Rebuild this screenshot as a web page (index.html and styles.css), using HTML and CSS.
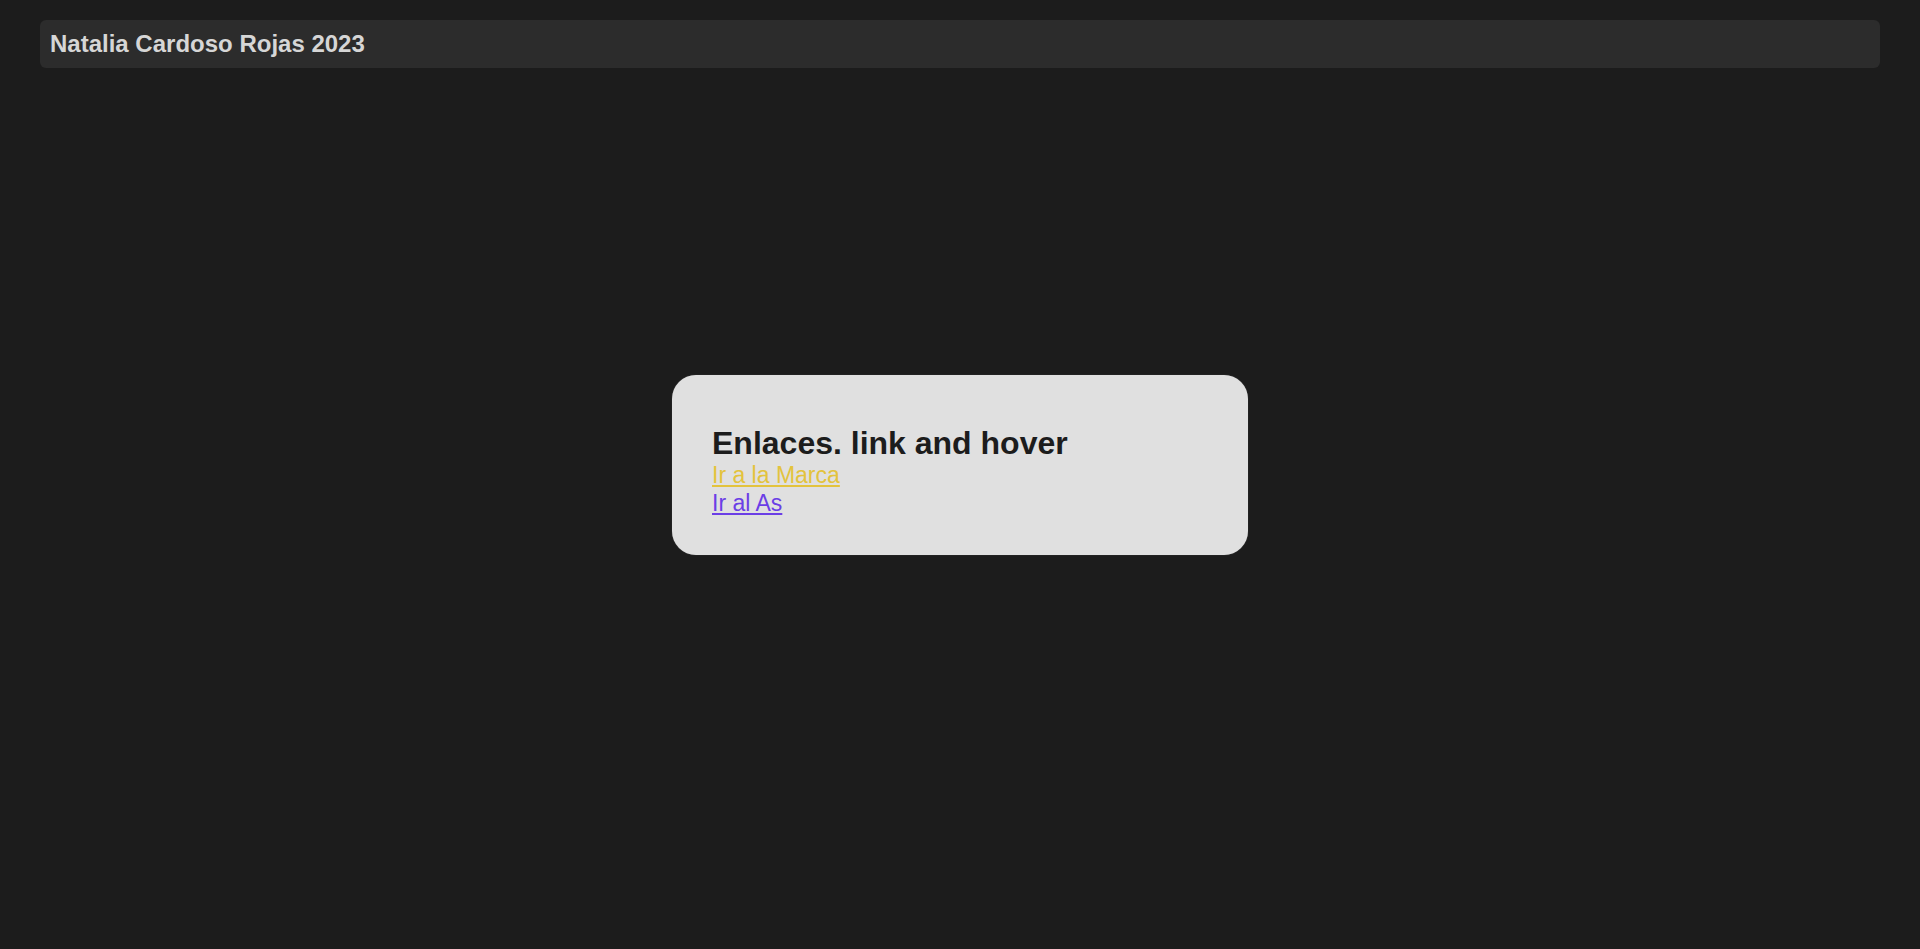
FILE: index.html
```html
<!DOCTYPE html>
<html lang="es">
<head>
<meta charset="utf-8">
<title>Enlaces</title>
<link rel="stylesheet" href="styles.css">
</head>
<body>
<header class="topbar">Natalia Cardoso Rojas 2023</header>
<main class="stage">
  <section class="card">
    <h1 class="card-title">Enlaces. link and hover</h1>
    <a class="link link-marca" href="#">Ir a la Marca</a>
    <a class="link link-as" href="#">Ir al As</a>
  </section>
</main>
</body>
</html>
```
FILE: styles.css
```css
html, body {
  margin: 0;
  padding: 0;
}
body {
  background: #1c1c1c;
  font-family: "Liberation Sans", Arial, sans-serif;
  padding: 20px 40px 0;
  box-sizing: border-box;
  min-height: 100vh;
}
.topbar {
  background: #2c2c2c;
  color: #d6d6d6;
  font-size: 24px;
  font-weight: bold;
  line-height: 28px;
  padding: 10px;
  border-radius: 6px;
}
.stage {
  height: 794px;
  display: flex;
  align-items: center;
  justify-content: center;
}
.card {
  width: 576px;
  height: 180px;
  box-sizing: border-box;
  background: #e0e0e0;
  border-radius: 24px;
  padding: 49px 40px 38px;
  display: flex;
  flex-direction: column;
  align-items: flex-start;
  box-shadow: 0 0 1px rgba(255,255,255,0.3);
}
.card-title {
  margin: 0;
  font-size: 32px;
  line-height: 38px;
  font-weight: bold;
  color: #1c1c1c;
}
.link {
  font-size: 23px;
  line-height: 27.5px;
  text-decoration: underline;
}
.link-marca {
  color: #e3c33d;
}
.link-as {
  color: #6b3ee6;
}
```
